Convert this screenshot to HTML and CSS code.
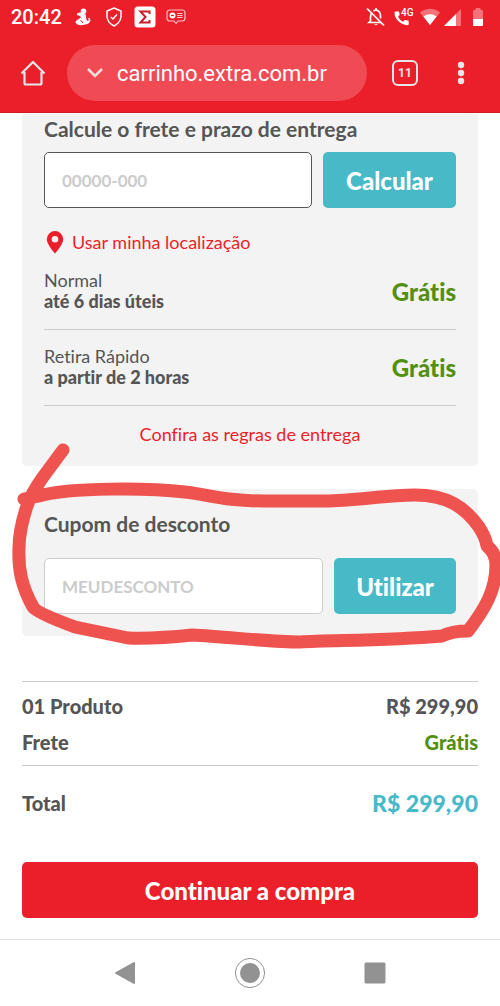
FILE: index.html
```
<!DOCTYPE html>
<html lang="pt-BR">
<head>
<meta charset="utf-8">
<meta name="viewport" content="width=device-width, initial-scale=1">
<title>Carrinho</title>
<link rel="stylesheet" href="styles.css">
</head>
<body>
<header class="browser">
  <div class="status">
    <span class="clock">20:42</span>
    <svg class="status-figure" width="16" height="18" viewBox="0 0 16 18" fill="#fff"><circle cx="8.500" cy="3.200" r="2.800"/><path d="M5 4.500L9.500 5.500Q11.500 7 11 9.500L12 13L14 12L13 10.500L14.500 9.500L15.500 12.500Q14 16.500 10 16.500Q4 18.500 1 15.500Q-.5 13 3 11.500L6 9.500L5 8L2 7V5.500Z"/><path d="M5.500 12L8 15" stroke="#eb1f2a" fill="none"/></svg>
    <svg class="status-shield" width="16" height="20" viewBox="0 0 16 20" fill="none" stroke="#fff" stroke-width="1.500"><path d="M8 1L15 4V10Q14 16 8 19Q2 16 1 10V4Z"/><path d="M4.800 10L7 12L11 7.500"/></svg>
    <svg class="status-sigma" width="22" height="22" viewBox="0 0 22 22"><rect x=".5" y=".5" width="21" height="21" rx="3.500" fill="#fff"/><path d="M15.500 8V5.500H6.500L11.500 11L6.500 16.500H15.500V14" fill="none" stroke="#c91f2b" stroke-width="2"/></svg>
    <svg class="status-card" width="20" height="16" viewBox="0 0 20 16" fill="none" stroke="#ffc2c5" stroke-width="1.200"><path d="M4 1H16Q19 1 19 4V9Q19 12 16 12H12L10 14.500L8 12H4Q1 12 1 9V4Q1 1 4 1Z"/><circle cx="6.500" cy="6.500" r="3" fill="#fff" stroke="none"/><path d="M5 6.500H8" stroke="#eb1f2a"/><path d="M11 4.500H16.500M11 6.500H16.500M11 8.500H16.500"/></svg>
    <span class="spacer"></span>
    <svg width="20" height="20" viewBox="0 0 20 20" fill="none" stroke="#fff" stroke-width="1.700"><path d="M6 5.500Q4.500 7 4.500 10V14L3 15.500H15M7.500 4Q9 3 10 3Q14.500 4 14.500 9V11.500M10 1V3"/><path d="M8 17.200H12Q10 19.500 8 17.200Z" fill="#fff" stroke="none"/><path d="M1 1.500L18 18.500"/></svg>
    <svg class="status-call" width="20" height="20" viewBox="0 0 20 20"><path d="M1.500 4.500H4.500Q5.100 4.500 5.200 5.200L5.700 8L3.900 9.800Q5.600 13 9 14.800L10.900 13L14 13.600Q14.700 13.800 14.700 14.400V17.500Q14.700 18.300 13.700 18.300Q8 18 4 13.800Q.5 10 .5 5.500Q.5 4.500 1.500 4.500Z" fill="#fff"/><text x="7" y="9" class="network">4G</text></svg>
    <svg class="status-wifi" width="22" height="18" viewBox="0 0 22 18"><path d="M1 4.500Q11-3 21 4.500L11 17Z" fill="#f4737a"/><path d="M4.400 8.500Q11 4 17.600 8.500L11 17Z" fill="#fff"/></svg>
    <svg class="status-signal" width="17" height="17" viewBox="0 0 17 17"><path d="M17 0V17H0Z" fill="#f4737a"/><path d="M12 5V17H0Z" fill="#fff"/></svg>
    <svg class="status-battery" width="12" height="18" viewBox="0 0 12 18"><path d="M3.500 0H8.500V2H10Q11 2 11 3V11H1V3Q1 2 2 2H3.500Z" fill="#f4737a"/><path d="M1 11H11V17Q11 18 10 18H2Q1 18 1 17Z" fill="#fff"/></svg>
  </div>
  <div class="toolbar">
    <button class="tool" aria-label="Início"><svg width="26" height="28" viewBox="0 0 26 28" fill="none" stroke="#e6e6e6" stroke-width="2.200"><path d="M4.500 13V24Q4.500 25.500 6 25.500H20Q21.500 25.500 21.500 24V13M1.500 14.500L13 3L24.500 14.500" stroke-linejoin="round"/></svg></button>
    <div class="address">
      <svg width="16" height="12" viewBox="0 0 16 12" fill="none" stroke="#f5dcdd" stroke-width="2.500"><path d="M1 2L8 9L15 2"/></svg>
      <span>carrinho.extra.com.br</span>
    </div>
    <button class="tool tabs" aria-label="Abas abertas">11</button>
    <button class="tool more" aria-label="Mais opções"><svg width="8" height="24" viewBox="0 0 8 24" fill="#e6e6e6"><circle cx="4" cy="4" r="3.200"/><circle cx="4" cy="12" r="3.200"/><circle cx="4" cy="20" r="3.200"/></svg></button>
  </div>
</header>

<main class="page">
  <section class="card shipping">
    <label class="heading" for="cep">Calcule o frete e prazo de entrega</label>
    <form class="entry">
      <input class="field field-dark" id="cep" type="text" placeholder="00000-000">
      <button class="action calculate" type="button">Calcular</button>
    </form>
    <a class="location" href="#"><svg width="18" height="24" viewBox="0 0 18 24"><path d="M9 1A8.200 8.200 0 0 0 .8 9.200C.8 14.500 9 23.500 9 23.500S17.200 14.500 17.200 9.200A8.200 8.200 0 0 0 9 1ZM9 6A3.300 3.300 0 1 1 9 12.600A3.300 3.300 0 1 1 9 6Z" fill="#eb1f2a"/></svg>Usar minha localização</a>
    <ul class="options">
      <li class="option"><div>Normal<strong>até 6 dias úteis</strong></div><b class="free">Grátis</b></li>
      <li class="option"><div>Retira Rápido<strong>a partir de 2 horas</strong></div><b class="free">Grátis</b></li>
    </ul>
    <a class="rules" href="#">Confira as regras de entrega</a>
  </section>

  <section class="card coupon">
    <label class="heading" for="cupom">Cupom de desconto</label>
    <form class="entry">
      <input class="field" id="cupom" type="text" placeholder="MEUDESCONTO">
      <button class="action apply" type="button">Utilizar</button>
    </form>
    <svg class="marker" viewBox="0 440 500 210" preserveAspectRatio="none"><path d="M63 450L43 477Q31 494 27 506C22 521 19 536 19 548C18 570 22 587 33 607Q37 613 75 627L128 638Q155 639 192 635C230 637 270 642 300 642C330 640 385 641 442 636Q452 631 468 631C485 609 496 590 496 565Q496 553 487 546Q486 538 479 527C465 507 447 495 415 495C385 495 355 501 325 501H265C224 501 211 495 185 492C150 488 70 487 39 496L24 499"/></svg>
  </section>

  <dl class="summary">
    <div class="line"><dt>01 Produto</dt><dd>R$ 299,90</dd></div>
    <div class="line"><dt>Frete</dt><dd class="green">Grátis</dd></div>
  </dl>
  <div class="total"><span>Total</span><strong>R$ 299,90</strong></div>
  <button class="checkout" type="button">Continuar a compra</button>
</main>

<nav class="system">
  <button aria-label="Voltar"><svg width="22" height="24" viewBox="0 0 22 24"><path d="M20 2V22L2 12Z" fill="#929292" stroke="#929292" stroke-width="2" stroke-linejoin="round"/></svg></button>
  <button aria-label="Tela inicial"><svg width="32" height="32" viewBox="0 0 32 32"><circle cx="16" cy="16" r="14.600" fill="none" stroke="#929292"/><circle cx="16" cy="16" r="10" fill="#929292"/></svg></button>
  <button aria-label="Recentes"><svg width="22" height="22" viewBox="0 0 22 22"><rect x=".5" y=".5" width="21" height="21" rx="1.500" fill="#929292"/></svg></button>
</nav>
</body>
</html>
```
FILE: styles.css
```
* { box-sizing: border-box; }
body {
  margin: 0;
  background: #fff;
  color: #555;
  font-family: Lato, sans-serif;
  font-size: 18px;
  font-variant-ligatures: none;
}
svg { display: block; flex: none; }
button { border: 0; padding: 0; font: inherit; font-variant-ligatures: none; cursor: pointer; }
a { color: #eb1f2a; text-decoration: none; }

.browser {
  background: #eb1f2a;
  color: #fff;
  font-family: Roboto, sans-serif;
  border-bottom: 1px solid #cf1a25;
}
.status {
  display: flex;
  align-items: center;
  height: 34px;
  padding: 0 16px 0 11px;
}
.clock { font-size: 20px; font-weight: 500; }
.spacer { flex: 1; }
.status-figure { margin-left: 13px; }
.status-shield { margin-left: 15px; }
.status-sigma { margin-left: 12px; }
.status-card { margin-left: 10px; }
.status-call { margin-left: 8px; }
.status-wifi { margin-left: 5px; }
.status-signal { margin-left: 3px; }
.status-battery { margin-left: 11px; }
.network { fill: #fff; font-family: Roboto, sans-serif; font-size: 10px; font-weight: 500; }

.toolbar {
  display: flex;
  align-items: center;
  padding: 11px 35px 11px 20px;
}
.tool { background: none; color: #e6e6e6; }
.address {
  flex: 1;
  display: flex;
  align-items: center;
  gap: 14px;
  height: 56px;
  margin: 0 25px 0 21px;
  padding: 0 20px;
  border-radius: 28px;
  background: #f04b55;
  font-size: 22px;
}
.tabs {
  width: 26px;
  height: 26px;
  border: 2px solid #e6e6e6;
  border-radius: 6px;
  font-size: 12px;
  font-weight: 700;
}
.more { margin-left: 39px; }

.page {
  display: flex;
  flex-direction: column;
  padding: 1px 22px 21px;
}
.card {
  display: flex;
  flex-direction: column;
  border-radius: 5px;
  background: #f3f3f3;
}
.shipping {
  padding: 3px 22px 20px;
  border-top-left-radius: 0;
  border-top-right-radius: 0;
}
.coupon {
  position: relative;
  margin: 23px 0 45px;
  padding: 23px 22px 22px;
}
.heading { font-size: 21px; font-weight: 700; line-height: 24px; }
.entry { display: flex; gap: 11px; margin-top: 11px; }
.coupon .entry { margin-top: 22px; }
.field {
  flex: 1;
  min-width: 0;
  height: 56px;
  padding: 0 17px;
  border: 1px solid #ccc;
  border-radius: 5px;
  background: #fff;
  color: #555;
  font: 700 17px Lato, sans-serif;
}
.field-dark { border-color: #555; }
.field::placeholder { color: #ccc; opacity: 1; }
.action {
  border-radius: 5px;
  background: #48b9c7;
  color: #fff;
  font-size: 24px;
  font-weight: 900;
}
.calculate { width: 133px; }
.apply { width: 122px; }
.location {
  display: flex;
  align-items: center;
  gap: 8px;
  margin-top: 22px;
  padding-left: 2px;
  line-height: 24px;
}
.options { margin: 0; padding: 0; list-style: none; }
.option {
  display: flex;
  align-items: center;
  justify-content: space-between;
  padding: 16px 0 17px;
  border-bottom: 1px solid #ccc;
  line-height: 21px;
}
.option strong { display: block; font-weight: 900; }
.free { color: #539012; font-size: 24px; font-weight: 900; }
.rules { margin-top: 16px; line-height: 24px; text-align: center; }

/* Hand-drawn loop laid over the coupon card */
.marker {
  position: absolute;
  top: -49px;
  left: -22px;
  width: calc(100% + 44px);
  height: 210px;
  overflow: visible;
  pointer-events: none;
  fill: none;
  stroke: #ef534f;
  stroke-width: 13;
  stroke-linecap: round;
  stroke-linejoin: round;
}

.summary {
  display: flex;
  flex-direction: column;
  gap: 12px;
  margin: 0;
  padding: 12px 0 11px;
  border-top: 1px solid #ccc;
  border-bottom: 1px solid #ccc;
  font-size: 20px;
  font-weight: 900;
  line-height: 24px;
}
.line { display: flex; justify-content: space-between; }
.line dd { margin: 0; }
.line .green { color: #539012; }
.total {
  display: flex;
  align-items: center;
  justify-content: space-between;
  margin: 23px 0 45px;
  font-size: 20px;
  font-weight: 900;
  line-height: 28px;
}
.total strong { color: #48b9c7; font-size: 23px; font-weight: 900; }
.checkout {
  height: 56px;
  border-radius: 5px;
  background: #eb1f2a;
  color: #fff;
  font-size: 24px;
  font-weight: 900;
}
.system {
  display: grid;
  grid-template-columns: repeat(3, 1fr);
  align-items: center;
  height: 67px;
  padding: 0 63px;
  border-top: 1px solid #ddd;
}
.system button { display: flex; justify-content: center; background: none; }
```
